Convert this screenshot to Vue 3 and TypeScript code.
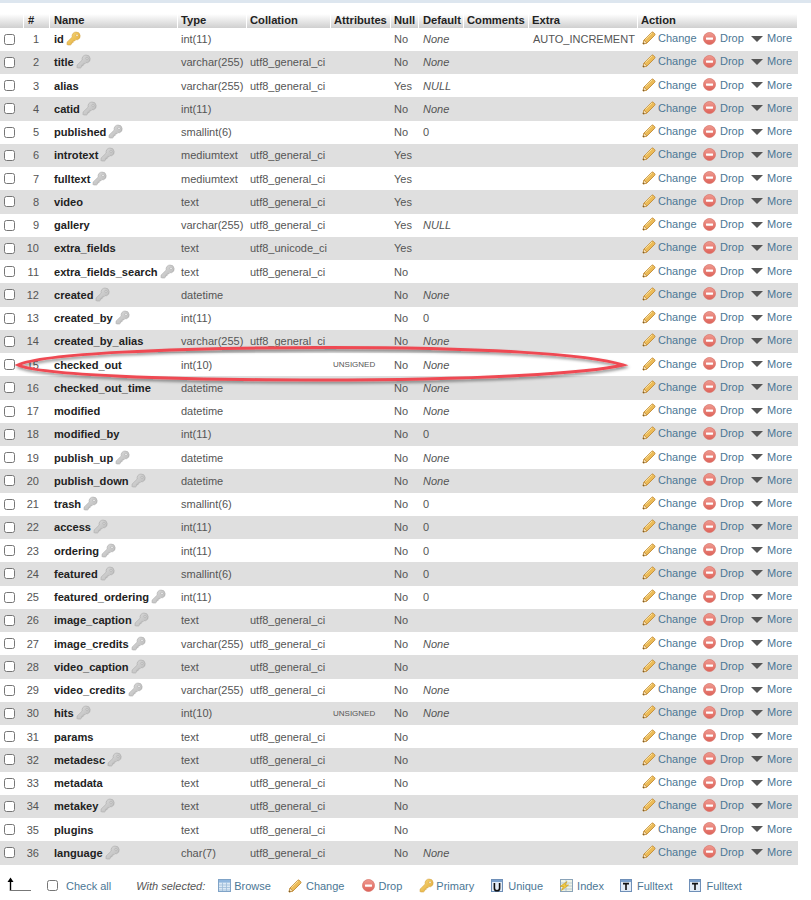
<script setup lang="ts">
interface Col { n: number; name: string; key: string; type: string; coll: string; attr: string; nul: string; def: string; extra: string }
const U = 'utf8_general_ci'
const raw: [string, string, string, string, string, string, string?, string?][] = [
  ['id', 'p', 'int(11)', '', 'No', 'None', '', 'AUTO_INCREMENT'],
  ['title', 'g', 'varchar(255)', U, 'No', 'None'],
  ['alias', '', 'varchar(255)', U, 'Yes', 'NULL'],
  ['catid', 'g', 'int(11)', '', 'No', 'None'],
  ['published', 'g', 'smallint(6)', '', 'No', '0'],
  ['introtext', 'g', 'mediumtext', U, 'Yes', ''],
  ['fulltext', 'g', 'mediumtext', U, 'Yes', ''],
  ['video', '', 'text', U, 'Yes', ''],
  ['gallery', '', 'varchar(255)', U, 'Yes', 'NULL'],
  ['extra_fields', '', 'text', 'utf8_unicode_ci', 'Yes', ''],
  ['extra_fields_search', 'g', 'text', U, 'No', ''],
  ['created', 'g', 'datetime', '', 'No', 'None'],
  ['created_by', 'g', 'int(11)', '', 'No', '0'],
  ['created_by_alias', '', 'varchar(255)', U, 'No', 'None'],
  ['checked_out', '', 'int(10)', '', 'No', 'None', 'UNSIGNED'],
  ['checked_out_time', '', 'datetime', '', 'No', 'None'],
  ['modified', '', 'datetime', '', 'No', 'None'],
  ['modified_by', '', 'int(11)', '', 'No', '0'],
  ['publish_up', 'g', 'datetime', '', 'No', 'None'],
  ['publish_down', 'g', 'datetime', '', 'No', 'None'],
  ['trash', 'g', 'smallint(6)', '', 'No', '0'],
  ['access', 'g', 'int(11)', '', 'No', '0'],
  ['ordering', 'g', 'int(11)', '', 'No', '0'],
  ['featured', 'g', 'smallint(6)', '', 'No', '0'],
  ['featured_ordering', 'g', 'int(11)', '', 'No', '0'],
  ['image_caption', 'g', 'text', U, 'No', ''],
  ['image_credits', 'g', 'varchar(255)', U, 'No', 'None'],
  ['video_caption', 'g', 'text', U, 'No', ''],
  ['video_credits', 'g', 'varchar(255)', U, 'No', 'None'],
  ['hits', 'g', 'int(10)', '', 'No', 'None', 'UNSIGNED'],
  ['params', '', 'text', U, 'No', ''],
  ['metadesc', 'g', 'text', U, 'No', ''],
  ['metadata', '', 'text', U, 'No', ''],
  ['metakey', 'g', 'text', U, 'No', ''],
  ['plugins', '', 'text', U, 'No', ''],
  ['language', 'g', 'char(7)', U, 'No', 'None'],
]
const rows: Col[] = raw.map((r, i) => ({
  n: i + 1, name: r[0], key: r[1], type: r[2], coll: r[3], nul: r[4], def: r[5], attr: r[6] ?? '', extra: r[7] ?? '',
}))
const heads = ['', '#', 'Name', 'Type', 'Collation', 'Attributes', 'Null', 'Default', 'Comments', 'Extra', 'Action']
</script>

<template>
  <div class="page">
    <svg class="defs" width="0" height="0" aria-hidden="true">
      <defs>
        <linearGradient id="goldg" x1="0" y1="0" x2="1" y2="1"><stop offset="0" stop-color="#f9dd80" /><stop offset="1" stop-color="#e0a633" /></linearGradient>
        <linearGradient id="greyg" x1="0" y1="0" x2="1" y2="1"><stop offset="0" stop-color="#dedede" /><stop offset="1" stop-color="#b6b6b6" /></linearGradient>
        <linearGradient id="redg" x1="0" y1="0" x2="0" y2="1"><stop offset="0" stop-color="#f09a90" /><stop offset="1" stop-color="#de6259" /></linearGradient>
        <symbol id="key" viewBox="0 0 15 15">
          <path d="M10 1a4 4 0 0 1 1.4 7.8L10 8.6 8.6 10H7.2v1.4H5.8v1.4L4.4 14H1.6L1 13.4v-2.2l5.2-5.1A4 4 0 0 1 10 1zm1 2.2a1.1 1.1 0 1 0 0 2.2 1.1 1.1 0 0 0 0-2.2z" fill-rule="evenodd" />
        </symbol>
        <symbol id="pencil" viewBox="0 0 14 14">
          <path d="M1 13l1-4L9.6 1.4a1.3 1.3 0 0 1 1.8 0l1.2 1.2a1.3 1.3 0 0 1 0 1.8L5 12z" fill="#ecbb58" stroke="#c08a38" stroke-width=".9" stroke-linejoin="round" />
          <path d="M1 13l1-4 3 3z" fill="#f6e2b8" stroke="#c08a38" stroke-width=".7" stroke-linejoin="round" />
          <path d="M1 13l.4-1.6 1.2 1.2z" fill="#5a4520" />
          <path d="M3.4 8.4L10 1.9" stroke="#fbe7a8" stroke-width="1" />
        </symbol>
        <symbol id="drop" viewBox="0 0 13 13">
          <circle cx="6.5" cy="6.5" r="6" fill="url(#redg)" stroke="#d9776d" stroke-width=".8" />
          <rect x="3" y="5.4" width="7" height="2.3" fill="#fff" rx=".4" />
        </symbol>
        <symbol id="browse" viewBox="0 0 13 13">
          <rect x=".5" y=".5" width="12" height="12" fill="#dce9f5" stroke="#7fa3c7" />
          <rect x="1" y="1" width="11" height="2.6" fill="#8fb6de" />
          <path d="M1 6h11M1 8.5h11M1 11h11M4.5 3.5V12M8.5 3.5V12" stroke="#9dbbd8" stroke-width=".8" />
        </symbol>
        <symbol id="unique" viewBox="0 0 13 13">
          <rect x=".5" y=".5" width="11" height="12" fill="#e3ecf6" stroke="#6e8fb8" />
          <rect x="1" y="1" width="10" height="2" fill="#7aa0cc" />
          <path d="M3.4 4v5.2a2.6 2.6 0 0 0 5.2 0V4" fill="none" stroke="#111" stroke-width="1.6" />
        </symbol>
        <symbol id="index" viewBox="0 0 14 13">
          <rect x="1.5" y=".5" width="12" height="12" fill="#eef3e6" stroke="#8aa3b8" />
          <path d="M2 4h11M2 7h11M2 10h11M7 1v11" stroke="#a9bccb" stroke-width=".8" />
          <path d="M8 2.5L1 7.5h3.4L2.4 11.5 9.6 6H6.2z" fill="#f1c93f" stroke="#c69a1e" stroke-width=".6" />
        </symbol>
        <symbol id="fulltext" viewBox="0 0 13 13">
          <rect x=".5" y=".5" width="11" height="12" fill="#e3ecf6" stroke="#6e8fb8" />
          <rect x="1" y="1" width="10" height="2" fill="#7aa0cc" />
          <path d="M3 4.6h6M6 4.6V11" fill="none" stroke="#111" stroke-width="1.6" />
        </symbol>
      </defs>
    </svg>

    <div class="topband"></div>

    <div class="table">
      <div class="row head">
        <div v-for="h in heads" :key="h" class="th">{{ h }}</div>
      </div>
      <div v-for="r in rows" :key="r.n" class="row body" :class="{ even: r.n % 2 === 0 }">
        <div class="cell cb"><input type="checkbox" /></div>
        <div class="cell num">{{ r.n }}</div>
        <div class="cell name">
          <b>{{ r.name }}</b>
          <svg v-if="r.key" class="key" :class="r.key === 'p' ? 'gold' : 'grey'" width="15" height="15"><use href="#key" /></svg>
        </div>
        <div class="cell">{{ r.type }}</div>
        <div class="cell">{{ r.coll }}</div>
        <div class="cell attr">{{ r.attr }}</div>
        <div class="cell">{{ r.nul }}</div>
        <div class="cell dflt" :class="{ lit: r.def === '0' }">{{ r.def }}</div>
        <div class="cell"></div>
        <div class="cell extra">{{ r.extra }}</div>
        <div class="cell actions">
          <span class="act a1"><svg width="14" height="14"><use href="#pencil" /></svg><a>Change</a></span>
          <span class="act a2"><svg width="13" height="13"><use href="#drop" /></svg><a>Drop</a></span>
          <span class="act a3"><svg class="tri" width="12" height="6" viewBox="0 0 12 6"><path d="M0 0h12L6 6z" fill="#555" /></svg><a>More</a></span>
        </div>
      </div>
    </div>

    <div class="footer">
      <svg class="arrow" width="24" height="15" viewBox="0 0 24 15">
        <path d="M3.5 14V3" stroke="#000" stroke-width="1.4" />
        <path d="M0.5 5L3.5 0.5 6.5 5z" fill="#000" />
        <path d="M3 13.5h21" stroke="#777" stroke-width="1" />
      </svg>
      <label class="checkall"><input type="checkbox" /><a>Check all</a></label>
      <i class="with">With selected:</i>
      <span class="fa f1"><svg width="13" height="13"><use href="#browse" /></svg><a>Browse</a></span>
      <span class="fa f2"><svg width="14" height="14"><use href="#pencil" /></svg><a>Change</a></span>
      <span class="fa f3"><svg width="13" height="13"><use href="#drop" /></svg><a>Drop</a></span>
      <span class="fa f4"><svg class="gold" width="15" height="15"><use href="#key" /></svg><a>Primary</a></span>
      <span class="fa f5"><svg width="13" height="13"><use href="#unique" /></svg><a>Unique</a></span>
      <span class="fa f6"><svg width="14" height="13"><use href="#index" /></svg><a>Index</a></span>
      <span class="fa f7"><svg width="13" height="13"><use href="#fulltext" /></svg><a>Fulltext</a></span>
      <span class="fa f8"><svg width="13" height="13"><use href="#fulltext" /></svg><a>Fulltext</a></span>
    </div>

    <svg class="annot" width="640" height="50" viewBox="0 0 640 50">
      <defs>
        <filter id="sh" x="-5%" y="-40%" width="110%" height="200%"><feDropShadow dx="1" dy="2" stdDeviation="1.4" flood-color="#000" flood-opacity=".45" /></filter>
      </defs>
      <path d="M18 25C40 14 170 7.5 330 7.5C480 7.5 590 14 623 25C590 33 480 40 320 40C170 40 40 35 18 25Z" fill="none" stroke="#ef4a52" stroke-width="3" filter="url(#sh)" />
    </svg>
  </div>
</template>

<style>
html, body { margin: 0; background: #fff; }
</style>

<style scoped>
.page {
  position: relative;
  width: 811px;
  height: 900px;
  overflow: hidden;
  font-family: "Liberation Sans", Arial, sans-serif;
  font-size: 11px;
  color: #555;
  background: #fff;
}
.defs { position: absolute; }
.topband { height: 3px; background: #dde6ef; }
.table { width: 798px; margin-top: 11px; }
.row {
  display: grid;
  grid-template-columns: 24px 26px 128px 69px 84px 60px 28px 45px 65px 109px 160px;
}
.head { height: 13.5px; }
.th {
  background: linear-gradient(#fff, #cfcfcf);
  border-right: 1px solid #fff;
  box-sizing: border-box;
  padding-left: 4px;
  font-weight: bold;
  font-size: 11.2px;
  line-height: 13px;
  color: #222;
  white-space: nowrap;
}
.th:nth-child(n + 4) { padding-left: 3px; }
.th:nth-child(8) { padding-left: 4px; }
.body { height: 23.26px; background: #fff; }
.body.even { background: #dfdfdf; }
.cell {
  display: flex;
  align-items: center;
  padding-left: 3px;
  white-space: nowrap;
  min-width: 0;
}
.cb { padding-left: 4px; }
.cb input, .checkall input { margin: 0; width: 11px; height: 11px; }
.num { justify-content: flex-end; padding-right: 11px; padding-left: 0; }
.name { padding-left: 4px; color: #222; font-size: 11.1px; }
.key { margin-left: 2px; margin-top: -1px; flex: none; }
.gold { fill: url(#goldg); stroke: #cf9a38; stroke-width: .5; }
.grey { fill: url(#greyg); stroke: #a0a0a0; stroke-width: .5; }
.attr { font-size: 8px; padding-left: 2px; }
.dflt { font-style: italic; padding-left: 4px; }
.dflt.lit { font-style: normal; }
.extra { padding-left: 4px; }
.actions { padding: 0; position: relative; top: -1px; }
.act { display: inline-flex; align-items: center; }
.act a, .fa a, .checkall a { color: #4c7795; }
.a1 { margin-left: 4px; width: 61px; }
.a1 a { margin-left: 2px; }
.a2 { width: 48px; }
.a2 a { margin-left: 4px; }
.a3 a { margin-left: 4px; }
.tri { margin-top: 1px; }
.footer {
  display: flex;
  align-items: center;
  height: 30px;
  margin-top: 6px;
  padding-left: 7px;
  white-space: nowrap;
}
.footer svg { flex: none; }
.arrow { margin-top: -2px; }
.checkall { display: inline-flex; align-items: center; margin-left: 16px; }
.checkall a { margin-left: 8px; }
.with { margin-left: 25px; color: #555; }
.fa { display: inline-flex; align-items: center; }
.fa a { margin-left: 4px; }
.f1 { margin-left: 13px; }
.f1 a { margin-left: 3px; }
.f2 { margin-left: 17px; }
.f3 { margin-left: 18px; }
.f3 a { margin-left: 3px; }
.f4 { margin-left: 17px; }
.f4 a { margin-left: 2px; }
.f5 { margin-left: 17px; }
.f6 { margin-left: 16px; }
.f7 { margin-left: 16px; }
.f8 { margin-left: 17px; }
.annot { position: absolute; left: 0; top: 340px; pointer-events: none; }
</style>
